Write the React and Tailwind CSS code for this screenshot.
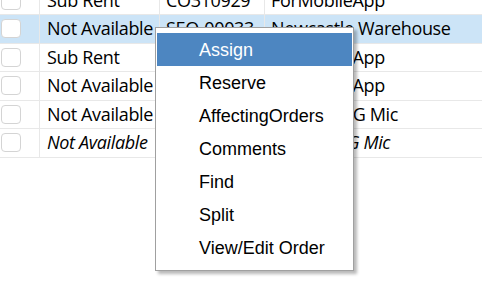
import React from 'react';

const rows = [
  { status: 'Sub Rent', ref: 'CO310929', location: 'ForMobileApp' },
  { status: 'Not Available', ref: 'SEQ-00033', location: 'Newcastle Warehouse', selected: true },
  { status: 'Sub Rent', ref: 'CO310929', location: 'ForMobileApp' },
  { status: 'Not Available', ref: 'CO310931', location: 'ForMobileApp' },
  { status: 'Not Available', ref: 'SEQ-00034', location: 'Shure SM G Mic' },
  { status: 'Not Available', ref: 'SEQ-00035', location: 'Shure SM G Mic', italic: true }
];

const menuItems = ['Assign', 'Reserve', 'AffectingOrders', 'Comments', 'Find', 'Split', 'View/Edit Order'];

export default function App() {
  return (
    <div className="relative w-[482px] h-[294px] overflow-hidden bg-white">
      <div className="-mt-[13.5px] font-['Open_Sans',sans-serif] text-[18px] tracking-[-0.35px] text-black">
        {rows.map((row, i) => (
          <GridRow key={i} {...row} />
        ))}
      </div>

      {/* context menu */}
      <div className="absolute left-[155px] top-[27px] w-[199px] h-[244px] bg-white border border-[#a0a0a0] pt-[5px] px-[1px] shadow-[3px_3px_3px_rgba(0,0,0,0.28)] font-['Liberation_Sans',Arial,sans-serif] text-[18px]">
        {menuItems.map((item, i) => (
          <div
            key={item}
            className={
              'h-[33px] flex items-center pl-[42px] pt-[2px] ' +
              (i === 0 ? 'bg-[#4d86c1] text-white' : 'text-black')
            }
          >
            {item}
          </div>
        ))}
      </div>
    </div>
  );
}

function GridRow({ status, ref: code, location, selected, italic }) {
  return (
    <div
      className={
        'grid grid-cols-[40px_120px_105px_1fr] h-[28.5px] border-b border-[#e8e8e8] ' +
        (selected ? 'bg-[#cce4f7] ' : '') +
        (italic ? 'italic' : '')
      }
    >
      <div className="flex items-center pl-[1px] border-r border-[#e8e8e8]">
        <div className="w-[20px] h-[19px] rounded-[4px] border-[1.5px] border-[#d4d4d4] bg-white" />
      </div>
      <div className="flex items-center pl-[7px] border-r border-[#e8e8e8] whitespace-nowrap overflow-hidden">{status}</div>
      <div className="flex items-center pl-[6px] border-r border-[#e8e8e8] whitespace-nowrap overflow-hidden">{code}</div>
      <div className="flex items-center pl-[6px] whitespace-nowrap">{location}</div>
    </div>
  );
}
